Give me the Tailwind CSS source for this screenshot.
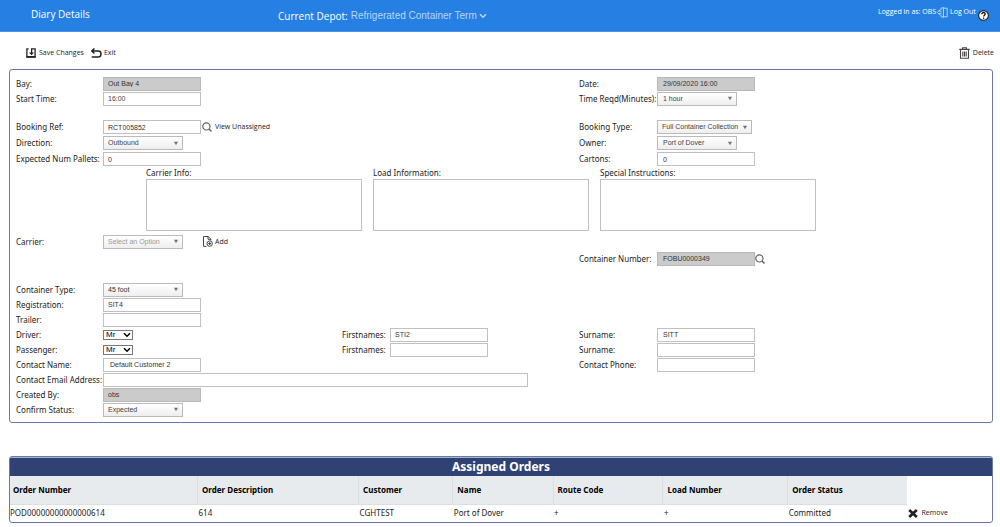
<!DOCTYPE html>
<html lang="en">
<head>
<meta charset="utf-8">
<meta name="viewport" content="width=device-width, initial-scale=1">
<title>Diary Details</title>
<script src="https://cdn.jsdelivr.net/npm/@tailwindcss/browser@4"></script>
</head>
<body class="bg-white font-['Noto_Sans',sans-serif] text-[8px] leading-3 whitespace-nowrap text-[#222]">

<svg class="hidden" aria-hidden="true">
  <symbol id="search" viewBox="0 0 10 10"><circle cx="4.4" cy="4.4" r="3.6" fill="none" stroke="#666" stroke-width="1.2"/><path d="M6.9 6.9 9.5 9.5" stroke="#666" stroke-width="1.5"/></symbol>
  <symbol id="caret" viewBox="0 0 6 5"><path d="M.9.7h4.2L3 4.3z" fill="#777"/></symbol>
  <symbol id="chevron" viewBox="0 0 8 6"><path d="M1 1.2 4 4.2 7 1.2" fill="none" stroke="currentColor" stroke-width="1.5"/></symbol>
</svg>

<header class="grid h-8 grid-cols-[278fr_600fr_122px] border-b border-[#4a93ea] bg-[#2680e3] font-['Open_Sans',sans-serif] text-white">
  <h1 class="pt-2 pl-[31px] text-[10px]">Diary Details</h1>
  <div class="flex items-center gap-[3px]">
    <label for="depot" class="text-[10px]">Current Depot:</label>
    <span class="relative flex items-center text-[#b9d6f7]">
      <select id="depot" class="appearance-none pr-[9px] font-['Liberation_Sans',sans-serif] text-[10px]"><option>Refrigerated Container Term</option></select>
      <svg class="pointer-events-none absolute right-0 h-[6px] w-2"><use href="#chevron"/></svg>
    </span>
  </div>
  <div class="flex items-start pt-[6px] text-[7px]">
    <span>Logged in as: OBS</span>
    <a href="#" class="ml-[1px] flex items-center gap-[2px]">
      <svg class="h-[11px] w-[11px]" viewBox="0 0 11 11" fill="none" stroke="#c5ddf8" stroke-width=".9"><path d="M4 3V1.2L6.5.6v9.8L4 9.6V7.5M6.5 1.2h3.7v8.6H6.5M4.5 4.3H2.6V2.8L.5 5.3l2.1 2.5V6.3h1.9"/></svg>
      Log Out</a>
    <a href="#" aria-label="Help" class="mt-1 ml-[2px]">
      <svg class="h-[11px] w-[11px]" viewBox="0 0 11 11"><circle cx="5.5" cy="5.5" r="4.9" fill="#fff" stroke="#222" stroke-width="1.1"/><path d="M3.8 4.2c0-2.3 3.5-2.2 3.4-.1 0 1.1-1.6 1.2-1.6 2.5" fill="none" stroke="#111" stroke-width="1.3"/><circle cx="5.6" cy="8.2" r=".8" fill="#111"/></svg>
    </a>
  </div>
</header>

<nav class="flex h-[37px] items-center justify-between pt-1 pr-[6px] pl-[26px] font-['Open_Sans',sans-serif] text-[7px]">
  <div class="flex gap-[7px]">
    <button class="flex items-center gap-[3px]">
      <svg class="h-[10px] w-[10px]" viewBox="0 0 10 10" fill="none" stroke="#222"><path d="M2.6.9H.9v8h8.2v-8H5.6v5" stroke-width="1.3"/><path d="M.4 8.9h9.2" stroke-width="1.7"/><path d="M3 4.5h5L5.5 7.2z" fill="#222" stroke="none"/></svg>
      Save Changes</button>
    <button class="flex items-center gap-[2px]">
      <svg class="h-[10px] w-[11px]" viewBox="0 0 11 10" fill="none" stroke="#222" stroke-width="1.5"><path d="M3.4.5.9 3l2.5 2.5M1 3h6.3c3.6 0 3.6 5.9 0 5.9H.7"/></svg>
      Exit</button>
  </div>
  <button class="flex items-center gap-[3px]">
    <svg class="h-[12px] w-[11px]" viewBox="0 0 11 12" fill="none" stroke="#444" stroke-width="1.1"><path d="M.3 2.4h10.4M3.6 2.3V.7h3.8v1.6M1.5 2.6V11.3h8V2.6M3.8 4.4v5.2M5.5 4.4v5.2M7.2 4.4v5.2"/></svg>
    Delete</button>
</nav>

<main class="mr-[7px] ml-[9px]">
<form class="rounded-[3px] border border-[#6b7aa5] pt-[6px] pb-[5px] pl-[6px]">
  <div class="grid grid-cols-[87px_239fr_48px_189fr_78px_335fr] auto-rows-[15px] items-center">
    <label for="bay">Bay:</label>
    <input id="bay" disabled value="Out Bay 4" class="h-[14px] w-[98px] border border-[#b8b8b8] bg-[#cbcbcb] px-1 font-['Liberation_Sans',sans-serif] text-[7px] text-[#333]">
    <label for="date" class="col-start-5">Date:</label>
    <input id="date" disabled value="29/09/2020 16:00" class="h-[14px] w-[98px] border border-[#b8b8b8] bg-[#cbcbcb] px-[5px] font-['Liberation_Sans',sans-serif] text-[7px] text-[#333]">
    <label for="start">Start Time:</label>
    <input id="start" value="16:00" class="h-[14px] w-[98px] border border-[#c0c0c0] px-1 font-['Liberation_Sans',sans-serif] text-[7px] text-[#444]">
    <label for="reqd" class="col-start-5">Time Reqd(Minutes):</label>
    <span class="relative flex w-20 items-center"><select id="reqd" class="h-[14px] w-full appearance-none border border-[#bbb] bg-linear-to-b from-white to-[#eee] px-[5px] font-['Liberation_Sans',sans-serif] text-[7px] text-[#444]"><option>1 hour</option></select><svg class="pointer-events-none absolute right-1 h-[5px] w-[6px]"><use href="#caret"/></svg></span>
  </div>

  <div class="mt-[13px] grid grid-cols-[87px_239fr_48px_189fr_78px_335fr] auto-rows-[16px] items-center">
    <label for="ref">Booking Ref:</label>
    <div class="flex items-center">
      <input id="ref" value="RCT005852" class="h-[14px] w-[98px] border border-[#c0c0c0] px-1 font-['Liberation_Sans',sans-serif] text-[7px] text-[#333]">
      <button type="button" class="ml-[1px] flex items-center gap-[3px] font-['Open_Sans',sans-serif] text-[7px]"><svg class="h-[10px] w-[10px]"><use href="#search"/></svg>View Unassigned</button>
    </div>
    <label for="btype" class="col-start-5">Booking Type:</label>
    <span class="relative flex w-[95px] items-center"><select id="btype" class="h-[14px] w-full appearance-none border border-[#bbb] bg-linear-to-b from-white to-[#eee] px-1 font-['Liberation_Sans',sans-serif] text-[7px] text-[#444]"><option>Full Container Collection</option></select><svg class="pointer-events-none absolute right-1 h-[5px] w-[6px]"><use href="#caret"/></svg></span>
    <label for="dir">Direction:</label>
    <span class="relative flex w-20 items-center"><select id="dir" class="h-[14px] w-full appearance-none border border-[#bbb] bg-linear-to-b from-white to-[#eee] px-1 font-['Liberation_Sans',sans-serif] text-[7px] text-[#444]"><option>Outbound</option></select><svg class="pointer-events-none absolute right-1 h-[5px] w-[6px]"><use href="#caret"/></svg></span>
    <label for="owner" class="col-start-5">Owner:</label>
    <span class="relative flex w-20 items-center"><select id="owner" class="h-[14px] w-full appearance-none border border-[#bbb] bg-linear-to-b from-white to-[#eee] px-[5px] font-['Liberation_Sans',sans-serif] text-[7px] text-[#444]"><option>Port of Dover</option></select><svg class="pointer-events-none absolute right-1 h-[5px] w-[6px]"><use href="#caret"/></svg></span>
    <label for="pallets">Expected Num Pallets:</label>
    <input id="pallets" value="0" class="h-[14px] w-[98px] border border-[#c0c0c0] px-1 font-['Liberation_Sans',sans-serif] text-[7px] text-[#333]">
    <label for="cartons" class="col-start-5">Cartons:</label>
    <input id="cartons" value="0" class="h-[14px] w-[98px] border border-[#c0c0c0] px-[5px] font-['Liberation_Sans',sans-serif] text-[7px] text-[#333]">
  </div>

  <div class="grid grid-cols-3 gap-[11px] pr-[176px] pl-[130px]">
    <div class="flex flex-col"><label for="cinfo">Carrier Info:</label><textarea id="cinfo" class="h-[52px] resize-none border border-[#c0c0c0]"></textarea></div>
    <div class="flex flex-col"><label for="linfo">Load Information:</label><textarea id="linfo" class="h-[52px] resize-none border border-[#c0c0c0]"></textarea></div>
    <div class="flex flex-col"><label for="sinfo">Special Instructions:</label><textarea id="sinfo" class="h-[52px] resize-none border border-[#c0c0c0]"></textarea></div>
  </div>

  <div class="mt-[2px] grid grid-cols-[87px_239fr_48px_189fr_78px_335fr] auto-rows-[17px] items-center">
    <label for="carrier">Carrier:</label>
    <div class="flex items-center gap-5">
      <span class="relative flex w-20 items-center"><select id="carrier" class="h-[14px] w-full appearance-none border border-[#bbb] bg-linear-to-b from-white to-[#eee] px-1 font-['Liberation_Sans',sans-serif] text-[7px] text-[#999]"><option>Select an Option</option></select><svg class="pointer-events-none absolute right-1 h-[5px] w-[6px]"><use href="#caret"/></svg></span>
      <button type="button" class="flex items-center gap-[2px] font-['Open_Sans',sans-serif] text-[7px]">
        <svg class="h-[11px] w-[10px]" viewBox="0 0 10 11" fill="none" stroke="#333" stroke-width=".9"><path d="M3.5 10.4H.5V.5h4.7l2.6 2.6v1.4M5 .6v2.7h2.7"/><circle cx="6.7" cy="7.6" r="2.7"/><path d="M6.7 6.1v3M5.2 7.6h3"/></svg>Add</button>
    </div>
    <label for="cnum" class="col-start-5 row-start-2">Container Number:</label>
    <div class="col-start-6 row-start-2 flex items-center">
      <input id="cnum" disabled value="FOBU0000349" class="h-[14px] w-[98px] border border-[#b8b8b8] bg-[#cbcbcb] px-[5px] font-['Liberation_Sans',sans-serif] text-[7px] text-[#333]">
      <button type="button" aria-label="Find container"><svg class="h-[10px] w-[10px]"><use href="#search"/></svg></button>
    </div>
  </div>

  <div class="mt-[15px] grid grid-cols-[87px_239fr_48px_189fr_78px_335fr] auto-rows-[15px] items-center">
    <label for="ctype">Container Type:</label>
    <span class="relative flex w-20 items-center"><select id="ctype" class="h-[14px] w-full appearance-none border border-[#bbb] bg-linear-to-b from-white to-[#eee] px-1 font-['Liberation_Sans',sans-serif] text-[7px] text-[#333]"><option>45 foot</option></select><svg class="pointer-events-none absolute right-1 h-[5px] w-[6px]"><use href="#caret"/></svg></span>
    <label for="reg" class="col-start-1">Registration:</label>
    <input id="reg" value="SIT4" class="h-[14px] w-[98px] border border-[#c0c0c0] px-1 font-['Liberation_Sans',sans-serif] text-[7px] text-[#333]">
    <label for="trailer" class="col-start-1">Trailer:</label>
    <input id="trailer" class="h-[14px] w-[98px] border border-[#c0c0c0] px-1">
    <label for="driver" class="col-start-1">Driver:</label>
    <span class="relative flex w-[30px] items-center"><select id="driver" class="h-[10px] w-full appearance-none border border-[#777] pl-[2px] font-['Liberation_Sans',sans-serif] text-[8px] leading-[8px] text-black"><option>Mr</option></select><svg class="pointer-events-none absolute right-[2px] h-[6px] w-2 text-black"><use href="#chevron"/></svg></span>
    <label for="dfirst">Firstnames:</label>
    <input id="dfirst" value="STI2" class="h-[14px] w-[98px] border border-[#c0c0c0] px-1 font-['Liberation_Sans',sans-serif] text-[7px] text-[#333]">
    <label for="dsur">Surname:</label>
    <input id="dsur" value="SITT" class="h-[14px] w-[98px] border border-[#c0c0c0] px-[5px] font-['Liberation_Sans',sans-serif] text-[7px] text-[#333]">
    <label for="pass">Passenger:</label>
    <span class="relative flex w-[30px] items-center"><select id="pass" class="h-[10px] w-full appearance-none border border-[#777] pl-[2px] font-['Liberation_Sans',sans-serif] text-[8px] leading-[8px] text-black"><option>Mr</option></select><svg class="pointer-events-none absolute right-[2px] h-[6px] w-2 text-black"><use href="#chevron"/></svg></span>
    <label for="pfirst">Firstnames:</label>
    <input id="pfirst" class="h-[14px] w-[98px] border border-[#c0c0c0] px-1">
    <label for="psur">Surname:</label>
    <input id="psur" class="h-[14px] w-[98px] border border-[#c0c0c0] px-1">
    <label for="cname">Contact Name:</label>
    <input id="cname" value="Default Customer 2" class="h-[14px] w-[98px] border border-[#c0c0c0] px-[6px] font-['Liberation_Sans',sans-serif] text-[7px] text-[#333]">
    <label for="cphone" class="col-start-5">Contact Phone:</label>
    <input id="cphone" class="h-[14px] w-[98px] border border-[#c0c0c0] px-1">
    <label for="email">Contact Email Address:</label>
    <input id="email" type="email" class="col-span-3 mr-[51px] h-[14px] border border-[#c0c0c0] px-1">
    <label for="created" class="col-start-1">Created By:</label>
    <input id="created" disabled value="obs" class="h-[14px] w-[98px] border border-[#b8b8b8] bg-[#cbcbcb] px-1 font-['Liberation_Sans',sans-serif] text-[7px] text-[#333]">
    <label for="status" class="col-start-1">Confirm Status:</label>
    <span class="relative flex w-20 items-center"><select id="status" class="h-[14px] w-full appearance-none border border-[#bbb] bg-linear-to-b from-white to-[#eee] px-1 font-['Liberation_Sans',sans-serif] text-[7px] text-[#444]"><option>Expected</option></select><svg class="pointer-events-none absolute right-1 h-[5px] w-[6px]"><use href="#caret"/></svg></span>
  </div>
</form>

<section class="mt-[33px] overflow-hidden rounded-[3px] border border-[#6b7aa5]">
  <h2 class="border-t border-[#aab3cc] bg-[#304274] text-center text-[12px] leading-[18px] font-bold text-white">Assigned Orders</h2>
  <table class="w-full table-fixed text-left">
    <colgroup><col class="w-[19.1%]"><col class="w-[16.4%]"><col class="w-[9.6%]"><col class="w-[10.2%]"><col class="w-[11.2%]"><col class="w-[12.7%]"><col class="w-[12.2%]"><col></colgroup>
    <thead>
      <tr class="h-[28px] text-black">
        <th class="border-r border-b border-[#dcdfe2] bg-[#e8ebee] pl-[3px]">Order Number</th>
        <th class="border-r border-b border-[#dcdfe2] bg-[#e8ebee] pl-1">Order Description</th>
        <th class="border-r border-b border-[#dcdfe2] bg-[#e8ebee] pl-1">Customer</th>
        <th class="border-r border-b border-[#dcdfe2] bg-[#e8ebee] pl-1">Name</th>
        <th class="border-r border-b border-[#dcdfe2] bg-[#e8ebee] pl-1">Route Code</th>
        <th class="border-r border-b border-[#dcdfe2] bg-[#e8ebee] pl-1">Load Number</th>
        <th class="border-b border-[#dcdfe2] bg-[#e8ebee] pl-1">Order Status</th>
        <td></td>
      </tr>
    </thead>
    <tbody>
      <tr class="h-[18px]">
        <td>POD00000000000000614</td><td class="pl-[1px]">614</td><td class="pl-[1px]">CGHTEST</td><td class="pl-[1px]">Port of Dover</td><td class="pl-[1px]">+</td><td class="pl-[1px]">+</td><td class="pl-[1px]">Committed</td>
        <td class="pl-[1px]"><button class="flex items-center gap-[3px] font-['Open_Sans',sans-serif] text-[7px]"><svg class="h-[9px] w-[10px]" viewBox="0 0 10 9"><path d="M1.2 1 8.8 8M8.8 1 1.2 8" stroke="#222" stroke-width="2.7"/></svg>Remove</button></td>
      </tr>
    </tbody>
  </table>
</section>
</main>
</body>
</html>
